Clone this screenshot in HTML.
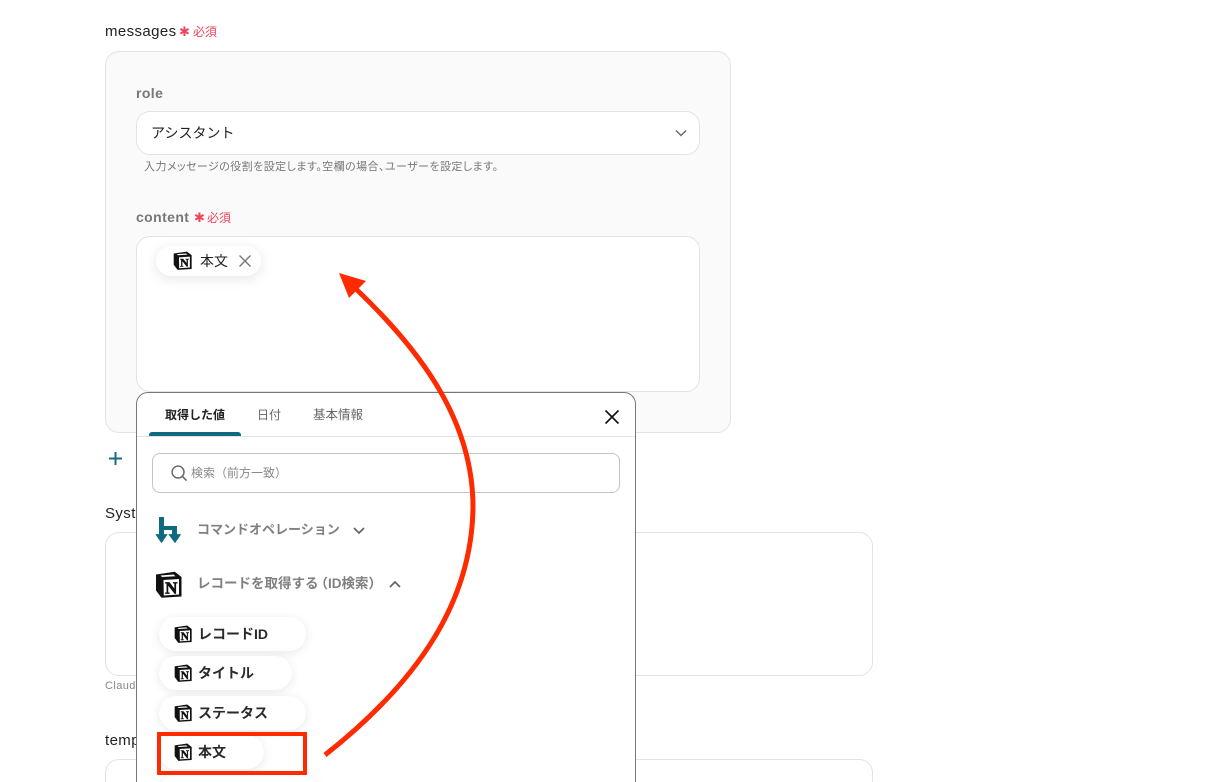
<!DOCTYPE html>
<html lang="ja"><head><meta charset="utf-8"><style>
*{box-sizing:border-box}
html,body{margin:0;padding:0;background:#fff;width:1228px;height:782px;overflow:hidden}
#p{width:1228px;height:782px;position:relative;overflow:hidden;font-family:"Liberation Sans","Noto Sans CJK JP",sans-serif;color:#222}
.a{position:absolute;white-space:nowrap}
.box{position:absolute;border:1px solid #e3e3e3;background:#fff;border-radius:14px}
.req{color:#f0445f;font-size:12px;line-height:16px}
.star{color:#f0445f;font-size:13px;line-height:16px}
.pill{position:absolute;left:159px;height:34px;background:#fff;border-radius:17px;box-shadow:0 2px 10px rgba(0,0,0,.09);font-size:14px;font-weight:700;color:#2a2a2a;line-height:34px}
.pill svg{position:absolute;left:15px;top:8px}
.pill span{position:absolute;left:39px;top:0;white-space:nowrap}
.g{color:#777;font-weight:600}
.h{font-size:15px;letter-spacing:.4px;line-height:18px}
</style></head><body><div id="p">
<svg width="0" height="0" style="position:absolute"><defs>
<symbol id="n" viewBox="0 0 27 27">
<path d="M1 3.500 19.800 .8 26.500 6V25.500L6.500 26.800 1 19.500Z" fill="#111"/>
<path d="M5.500 4.500 18.500 3.500 20.500 5.200 7 6Z" fill="#fff"/>
<path d="M8.500 9 24 8V23.500L8.800 24.500Z" fill="#fff"/>
<text x="16.300" y="22.300" text-anchor="middle" font-family="Liberation Serif,serif" font-weight="700" font-size="17" fill="#111" stroke="#111" stroke-width=".7">N</text>
</symbol></defs></svg>

<div class="a h" style="left:105px;top:23px">messages</div>
<div class="a star" style="left:179px;top:24px">✱</div>
<div class="a req" style="left:193px;top:24px">必須</div>
<div class="box" style="left:105px;top:51px;width:626px;height:382px;background:#fafafa"></div>

<div class="a g" style="left:136px;top:84px;font-size:14px;line-height:18px;letter-spacing:.4px">role</div>
<div class="box" style="left:136px;top:111px;width:564px;height:44px"></div>
<div class="a" style="left:151px;top:123px;font-size:14px;line-height:20px;color:#222">アシスタント</div>
<svg class="a" style="left:674px;top:128px" width="14" height="10" viewBox="0 0 14 10"><path d="M2 2.500 7 7.500 12 2.500" fill="none" stroke="#6c6c6c" stroke-width="1.500"/></svg>
<div class="a" style="left:144px;top:159px;font-size:11px;line-height:16px;color:#777;font-feature-settings:'palt';letter-spacing:.44px">入力メッセージの役割を設定します。空欄の場合、ユーザーを設定します。</div>

<div class="a g" style="left:136px;top:208px;font-size:14px;line-height:18px;letter-spacing:.4px">content</div>
<div class="a star" style="left:194px;top:210px">✱</div>
<div class="a req" style="left:207px;top:210px">必須</div>
<div class="box" style="left:136px;top:236px;width:564px;height:156px"></div>
<div class="a" style="left:156px;top:246px;width:105px;height:30px;background:#fff;border-radius:15px;box-shadow:0 3px 12px rgba(0,0,0,.1)"></div>
<svg class="a" style="left:173px;top:251px" width="19" height="19"><use href="#n"/></svg>
<div class="a" style="left:200px;top:251px;font-size:14px;line-height:20px;color:#222">本文</div>
<svg class="a" style="left:238px;top:254px" width="14" height="14" viewBox="0 0 14 14"><path d="M1.500 1.500 12.500 12.500M12.500 1.500 1.500 12.500" stroke="#777" stroke-width="1.400"/></svg>

<svg class="a" style="left:109px;top:452px" width="13" height="13" viewBox="0 0 13 13"><path d="M6.500 0v13M0 6.500h13" stroke="#1a6b80" stroke-width="2"/></svg>

<div class="a h" style="left:105px;top:505px">System</div>
<div class="box" style="left:105px;top:532px;width:768px;height:144px"></div>
<div class="a" style="left:105px;top:678px;font-size:11px;line-height:16px;color:#888;letter-spacing:.4px">Claude</div>
<div class="a h" style="left:105px;top:732px">temperature</div>
<div class="box" style="left:105px;top:759px;width:768px;height:60px"></div>

<!-- popup -->
<div class="a" style="left:136px;top:392px;width:500px;height:420px;background:#fff;border:1px solid #777;border-radius:12px"></div>
<div class="a" style="left:137px;top:436px;width:498px;height:1px;background:#e3e3e3"></div>
<div class="a" style="left:165px;top:407px;font-size:12px;line-height:17px;font-weight:700;color:#222">取得した値</div>
<div class="a" style="left:257px;top:407px;font-size:12px;line-height:17px;color:#666">日付</div>
<div class="a" style="left:313px;top:407px;font-size:12.500px;line-height:17px;color:#666">基本情報</div>
<div class="a" style="left:149px;top:432px;width:92px;height:4px;background:#0f6a80;border-radius:3px 3px 0 0"></div>
<svg class="a" style="left:604px;top:409px" width="16" height="16" viewBox="0 0 16 16"><path d="M1.500 1.500 14.500 14.500M14.500 1.500 1.500 14.500" stroke="#111" stroke-width="1.600"/></svg>

<div class="a" style="left:152px;top:453px;width:468px;height:40px;border:1px solid #c4c4c4;border-radius:8px;background:#fff"></div>
<svg class="a" style="left:170px;top:464px" width="18" height="18" viewBox="0 0 19 19"><circle cx="8.500" cy="8.500" r="6.300" fill="none" stroke="#666" stroke-width="1.500"/><path d="M13 13 17.500 17.500" stroke="#666" stroke-width="1.600"/></svg>
<div class="a" style="left:191px;top:465px;font-size:12px;line-height:16px;color:#888">検索（前方一致）</div>

<svg class="a" style="left:155px;top:517px" width="27" height="27" viewBox="0 0 27 27"><path d="M4 0h5v9H22v9h-5v-5H9v5H4Z" fill="#0f6a80"/><path d="M1 17.500H12L6.500 25.500ZM14 17.500H25.500L20 25.500Z" fill="#0f6a80" stroke="#0f6a80" stroke-width=".8" stroke-linejoin="round"/></svg>
<div class="a" style="left:197px;top:521px;font-size:13px;line-height:18px;color:#808080;font-weight:700">コマンドオペレーション</div>
<svg class="a" style="left:352px;top:526px" width="14" height="10" viewBox="0 0 14 10"><path d="M2 2 7 7 12 2" fill="none" stroke="#666" stroke-width="1.800"/></svg>

<svg class="a" style="left:155px;top:571px" width="27" height="27"><use href="#n"/></svg>
<div class="a" style="left:197px;top:575px;font-size:13.500px;line-height:18px;color:#808080;font-weight:700">レコードを取得する<span style="margin-left:-4px">（ID検索）</span></div>
<svg class="a" style="left:388px;top:579px" width="14" height="10" viewBox="0 0 14 10"><path d="M2 8 7 3 12 8" fill="none" stroke="#666" stroke-width="1.800"/></svg>

<div class="pill" style="top:617px;width:147px"><svg width="18" height="18"><use href="#n"/></svg><span>レコードID</span></div>
<div class="pill" style="top:656px;width:133px"><svg width="18" height="18"><use href="#n"/></svg><span>タイトル</span></div>
<div class="pill" style="top:696px;width:147px"><svg width="18" height="18"><use href="#n"/></svg><span>ステータス</span></div>
<div class="pill" style="top:735px;width:105px"><svg width="18" height="18"><use href="#n"/></svg><span>本文</span></div>
<div class="pill" style="top:775px;width:160px"></div>

<!-- annotations -->
<div class="a" style="left:157px;top:732px;width:150px;height:43px;border:4px solid #fe2a00"></div>
<svg class="a" style="left:0;top:0" width="1228" height="782" viewBox="0 0 1228 782">
<path d="M325 755C420 680 472 600 473 507 473 420 420 350 356 289" fill="none" stroke="#fe2a00" stroke-width="5"/>
<path d="M339 273 366 281 349 298Z" fill="#fe2a00"/>
</svg>
</div></body></html>
